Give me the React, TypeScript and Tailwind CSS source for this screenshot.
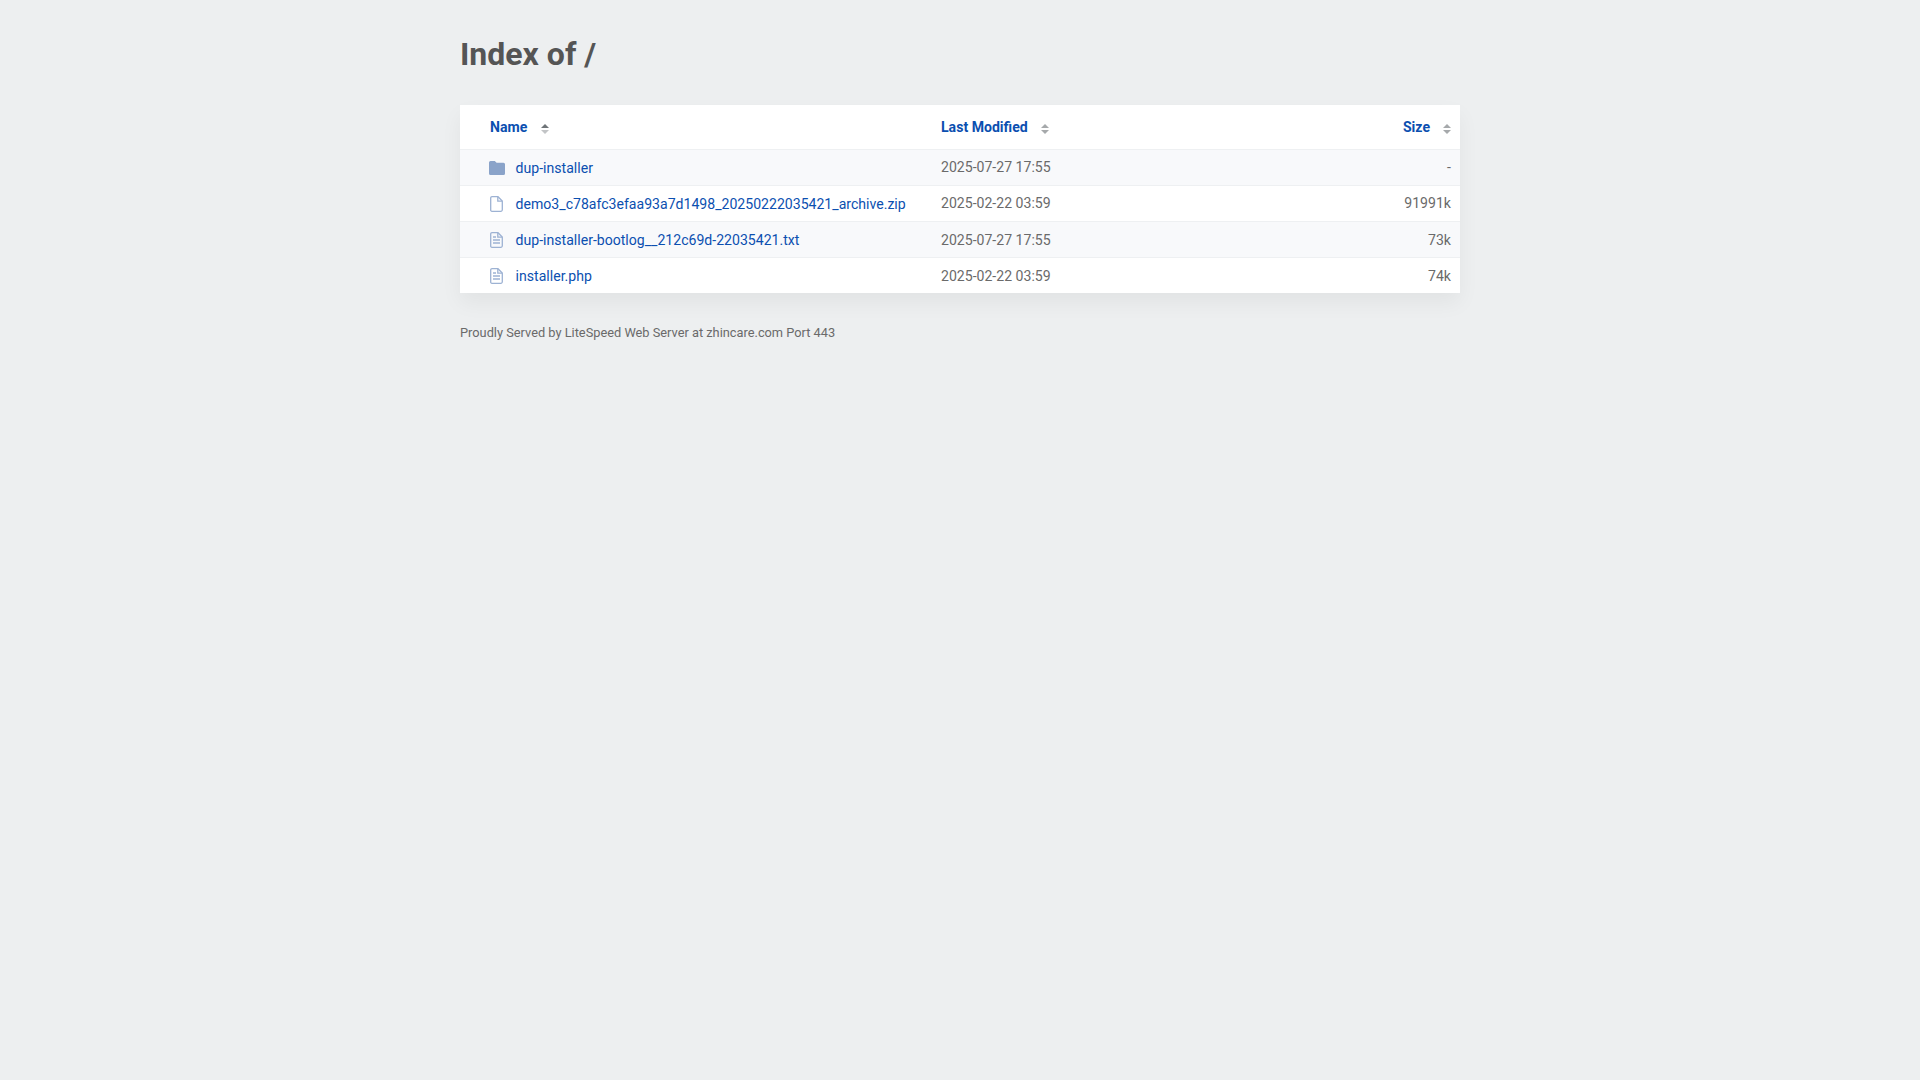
const rows = [
  { name: "dup-installer", date: "2025-07-27 17:55", size: "-", icon: "folder" },
  { name: "demo3_c78afc3efaa93a7d1498_20250222035421_archive.zip", date: "2025-02-22 03:59", size: "91991k", icon: "file" },
  { name: "dup-installer-bootlog__212c69d-22035421.txt", date: "2025-07-27 17:55", size: "73k", icon: "text" },
  { name: "installer.php", date: "2025-02-22 03:59", size: "74k", icon: "text" },
]

function SortIcon({ active = false, gap = "ml-[13px]" }: { active?: boolean; gap?: string }) {
  return (
    <svg width="8" height="10" viewBox="0 0 8 10" className={`${gap} mt-[2px] inline-block align-middle`}>
      <path d="M4 0 L8 4 H0 Z" fill={active ? "#6f7478" : "#a6a9ab"} />
      <path d="M4 10 L8 6 H0 Z" fill={active ? "#c2c4c6" : "#a6a9ab"} />
    </svg>
  )
}

function RowIcon({ type }: { type: string }) {
  if (type === "folder") {
    return (
      <svg width="16" height="14" viewBox="0 0 16 14" className="ml-[0.7px] block">
        <path d="M1.5 0 H5.8 L7.6 1.8 H14.5 A1.5 1.5 0 0 1 16 3.3 V12.5 A1.5 1.5 0 0 1 14.5 14 H1.5 A1.5 1.5 0 0 1 0 12.5 V1.5 A1.5 1.5 0 0 1 1.5 0 Z" fill="#8aa3c9" />
      </svg>
    )
  }
  return (
    <svg width="13" height="16" viewBox="0 0 13 16" fill="none" stroke="#9db2d3" strokeWidth="1.3" className="ml-[2px] block">
      <path d="M2 0.7 H8 L12.3 5 V13.8 A1.5 1.5 0 0 1 10.8 15.3 H2 A1.3 1.3 0 0 1 0.7 13.8 V2 A1.3 1.3 0 0 1 2 0.7 Z" />
      <path d="M7.8 0.9 V5.2 H12" />
      {type === "text" && <path d="M3 5 H6 M3 8 H10 M3 11 H10" />}
    </svg>
  )
}

export default function App() {
  return (
    <div className="min-h-screen bg-[#edeff0] font-['Roboto',sans-serif] text-[#6a6a6a]">
      <div className="mx-auto w-[1000px]">
        <h1 className="pt-[35px] pb-[32px] text-[32px] leading-[38px] font-bold text-[#555]">Index of /</h1>
        <table className="w-full table-fixed border-collapse bg-white text-[14.08px] shadow-[0_10px_20px_rgba(0,0,0,0.05)]">
          <colgroup>
            <col className="w-[473px]" />
            <col className="w-[300px]" />
            <col />
          </colgroup>
          <thead>
            <tr className="h-[44px] border-b border-[#eef0f2] text-[#0b4fb0]">
              <th className="pl-[30px] pt-[1px] text-left font-bold"><a href="#">Name</a><SortIcon active gap="ml-[14px]" /></th>
              <th className="pl-2 pt-[1px] text-left font-bold"><a href="#">Last Modified</a><SortIcon /></th>
              <th className="pr-[9px] pt-[1px] text-right font-bold"><a href="#">Size</a><SortIcon /></th>
            </tr>
          </thead>
          <tbody>
            {rows.map((row, i) => (
              <tr key={row.name} className={`h-[36px] border-b border-[#eef0f2] last:border-b-0 ${i % 2 === 0 ? "bg-[#f8f9fb]" : "bg-white"}`}>
                <td className="pl-7 pt-[2px]">
                  <a href="#" className="flex items-center text-[#0b4fb0]">
                    <span className="w-[27.6px]"><RowIcon type={row.icon} /></span>
                    <span className="pt-[1px]">{row.name}</span>
                  </a>
                </td>
                <td className={`pl-2 ${i < 2 ? "pt-[2px]" : "pt-[2.4px]"}`}>{row.date}</td>
                <td className={`pr-[9px] text-right ${i < 2 ? "pt-[2px]" : "pt-[2.4px]"}`}>{row.size}</td>
              </tr>
            ))}
          </tbody>
        </table>
        <p className="mt-[32px] text-[12.8px] leading-[15px]">Proudly Served by LiteSpeed Web Server at zhincare.com Port 443</p>
      </div>
    </div>
  )
}
